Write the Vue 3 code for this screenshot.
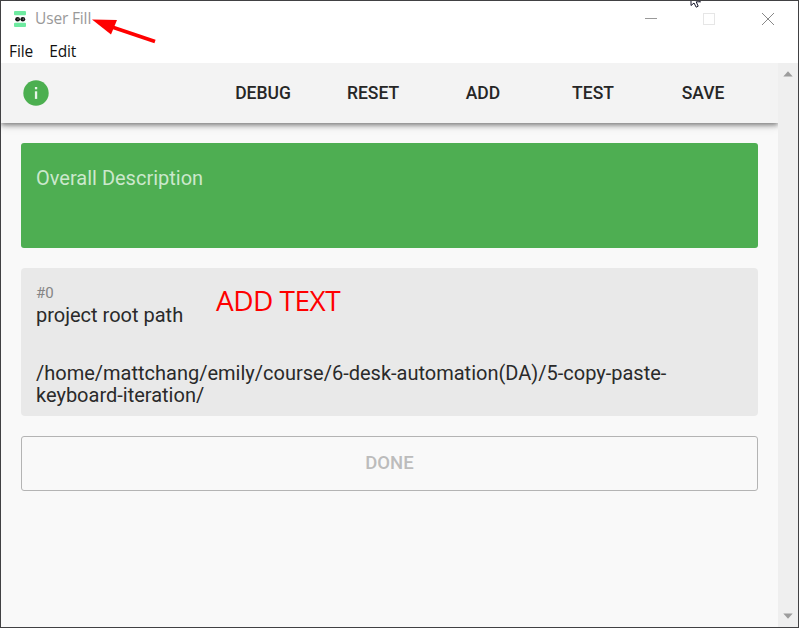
<script setup>
const actions = ['Debug', 'Reset', 'Add', 'Test', 'Save']
const menus = ['File', 'Edit']
</script>

<template>
  <div class="window">
    <header class="titlebar">
      <svg class="logo" width="12" height="16" viewBox="0 0 12 16">
        <rect width="12" height="4.3" rx="1" fill="#6eeaa0" />
        <rect y="11.7" width="12" height="4.3" rx="1" fill="#6eeaa0" />
        <ellipse cx="3.6" cy="8.3" rx="2.4" ry="2.3" fill="#111" />
        <ellipse cx="8.8" cy="8.3" rx="2.4" ry="2.3" fill="#111" />
        <circle cx="4" cy="8" r="0.5" fill="#fff" />
        <circle cx="9.2" cy="8" r="0.5" fill="#fff" />
      </svg>
      <span class="title">User Fill</span>
      <svg class="controls" width="132" height="14" viewBox="0 0 132 14" fill="none">
        <path d="M1 6.5H13" stroke="#999" />
        <rect x="59.5" y="1.5" width="11" height="11" stroke="#e6e6e6" />
        <path d="M118 1L130 13M130 1L118 13" stroke="#888" />
      </svg>
    </header>
    <nav class="menubar">
      <span v-for="m in menus" :key="m">{{ m }}</span>
    </nav>
    <div class="body">
      <div class="page">
        <div class="toolbar">
          <svg class="info" width="26" height="26" viewBox="0 0 26 26">
            <circle cx="13" cy="13" r="12.7" fill="#4caf50" />
            <rect x="11.9" y="7" width="2.3" height="2.3" fill="#e8f5e9" />
            <rect x="11.9" y="11.3" width="2.3" height="7.6" fill="#e8f5e9" />
          </svg>
          <div class="actions">
            <button v-for="a in actions" :key="a">{{ a }}</button>
          </div>
        </div>
        <main>
          <section class="description">Overall Description</section>
          <section class="card">
            <div class="index">#0</div>
            <div class="name">project root path</div>
            <div class="path">/home/mattchang/emily/course/6-desk-automation(DA)/5-copy-paste-<br>keyboard-iteration/</div>
          </section>
          <button class="done">Done</button>
        </main>
      </div>
      <aside class="scrollbar">
        <svg width="10" height="6" viewBox="0 0 10 6"><path d="M0.3 5.5L5 0.3L9.7 5.5Z" fill="#9c9c9c" /></svg>
        <svg width="10" height="6" viewBox="0 0 10 6"><path d="M0.3 0.5H9.7L5 5.7Z" fill="#9c9c9c" /></svg>
      </aside>
    </div>
    <svg class="arrow" width="70" height="32" viewBox="0 0 70 32">
      <path d="M21 12L64 26.5" stroke="#f00" stroke-width="3.7" />
      <path d="M1 4.5L26 5L20 19.5Z" fill="#f00" />
    </svg>
    <span class="note">ADD TEXT</span>
    <svg class="cursor" width="14" height="8" viewBox="0 0 14 8">
      <path d="M1 -6V5.5L4 3L6.2 7.2L8.2 6.2L6.2 1.8H10.5Z" fill="#fff" stroke="#16162a" />
    </svg>
    <i class="edge-mark"></i>
  </div>
</template>

<style>
body {
  overflow: hidden;
}
</style>

<style scoped>
.window {
  position: relative;
  box-sizing: border-box;
  width: 799px;
  height: 628px;
  border: 1px solid #414143;
  display: flex;
  flex-direction: column;
  background: #fff;
  font-family: Roboto, sans-serif;
  color: #202020;
  overflow: hidden;
}
.titlebar {
  height: 36px;
  display: flex;
  align-items: center;
  padding: 0 22px 0 13px;
  flex: none;
}
.title {
  font: 15.5px/20px "Open Sans", sans-serif;
  color: #999;
  margin: -2px 0 0 9px;
  letter-spacing: -0.15px;
}
.controls {
  margin-left: auto;
}
.menubar {
  height: 26px;
  flex: none;
  display: flex;
  gap: 16px;
  padding-left: 8px;
  font: 15.5px/28px "Open Sans", sans-serif;
  letter-spacing: -0.1px;
  color: #111;
}
.body {
  flex: 1;
  display: flex;
  min-height: 0;
}
.page {
  flex: 1;
  background: #f9f9f9;
  overflow: hidden;
}
.toolbar {
  height: 60px;
  display: flex;
  align-items: center;
  justify-content: space-between;
  padding: 0 20px 0 22px;
  background: #f3f3f3;
  box-shadow: 0 2px 5px rgba(0, 0, 0, 0.45), 0 2px 10px rgba(0, 0, 0, 0.14);
}
.actions {
  display: flex;
}
button {
  font: 500 17.5px/24px Roboto, sans-serif;
  text-transform: uppercase;
  color: #262626;
  background: none;
  border: 0;
  padding: 0;
}
.actions button {
  width: 110px;
}
main {
  display: flex;
  flex-direction: column;
  gap: 20px;
  padding: 20px;
}
.description {
  box-sizing: border-box;
  height: 105px;
  border-radius: 3px;
  background: #4eae52;
  color: #cbe8cc;
  padding: 23px 15px;
  font-size: 20px;
  line-height: 24px;
}
.card {
  box-sizing: border-box;
  height: 148px;
  border-radius: 4px;
  background: #e9e9e9;
  padding: 15px;
  font-size: 20px;
  line-height: 22px;
}
.index {
  font-size: 15px;
  line-height: 20px;
  margin-bottom: 1px;
  color: #858585;
}
.name,
.path {
  color: #2a2a2a;
}
.path {
  margin-top: 36px;
  white-space: nowrap;
}
.done {
  height: 55px;
  border: 1px solid #b4b4b4;
  border-radius: 3px;
  color: #bcbcbc;
  font-size: 18.5px;
  padding-bottom: 2px;
}
.scrollbar {
  width: 20px;
  background: #efefef;
  display: flex;
  flex-direction: column;
  justify-content: space-between;
  align-items: center;
  padding: 8px 0;
  box-sizing: border-box;
}
.arrow {
  position: absolute;
  left: 90px;
  top: 14px;
}
.note {
  position: absolute;
  left: 215px;
  top: 281px;
  font: 28px/36px "Open Sans", sans-serif;
  letter-spacing: -0.5px;
  color: #f00;
  white-space: nowrap;
}
.cursor {
  position: absolute;
  left: 689px;
  top: -1px;
}
.edge-mark {
  position: absolute;
  left: -1px;
  top: 566px;
  width: 1px;
  height: 11px;
  background: #7f8c2c;
}
</style>
